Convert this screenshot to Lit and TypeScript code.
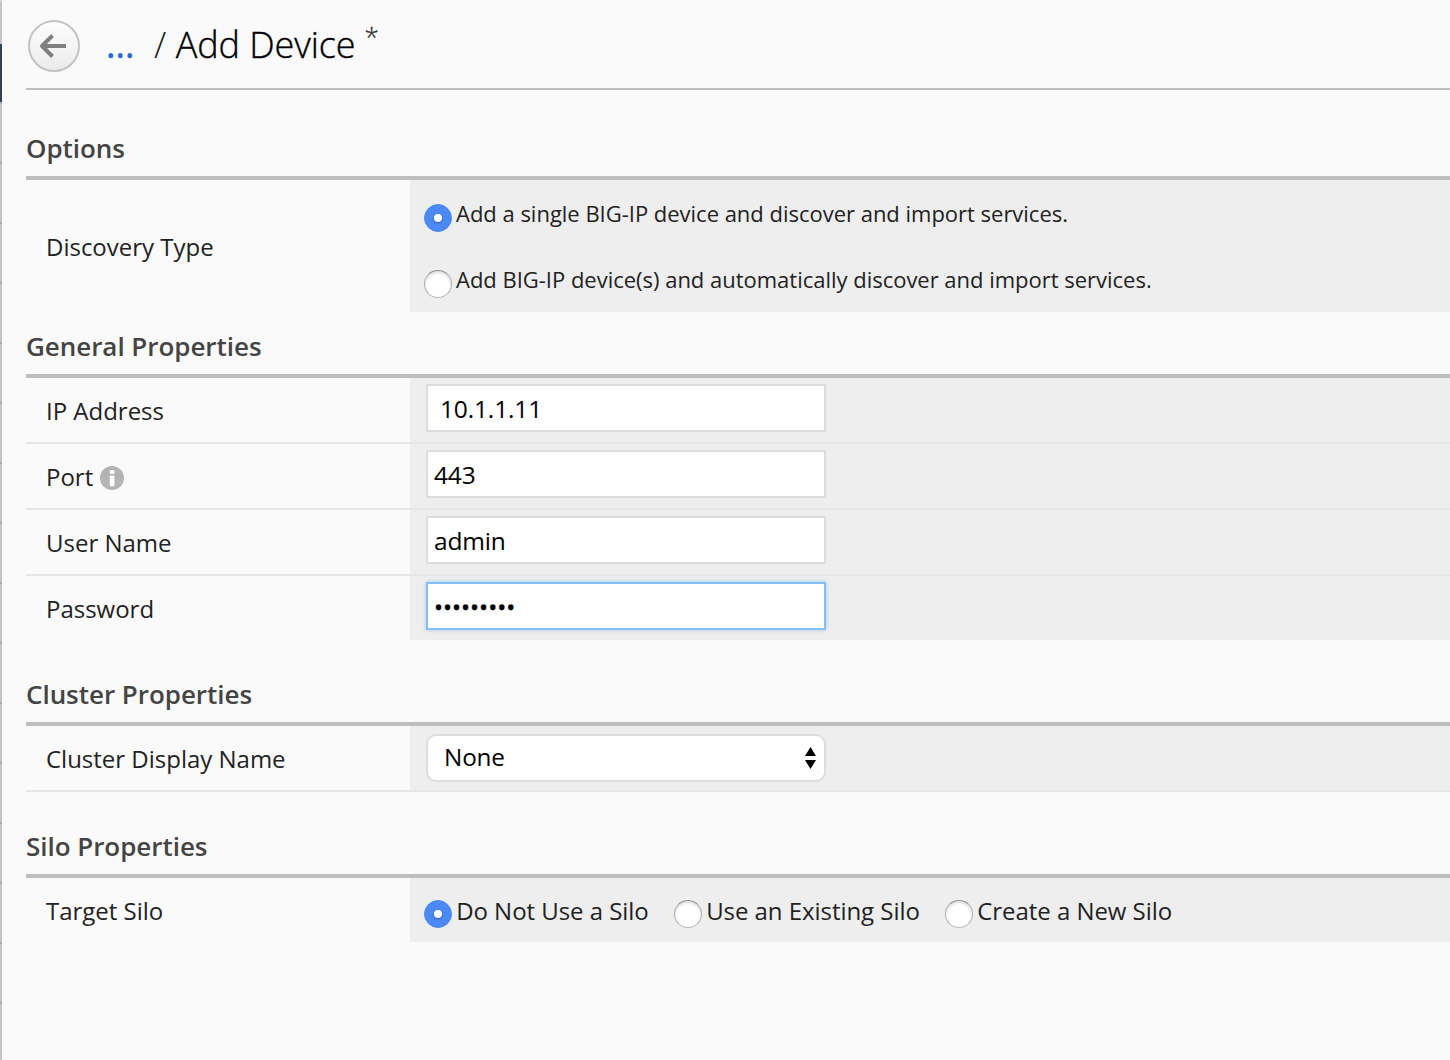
import { LitElement, html, css, svg } from "lit";
import { customElement, property } from "lit/decorators.js";
import { classMap } from "lit/directives/class-map.js";

@customElement("radio-option")
class RadioOption extends LitElement {
  @property() label = "";
  @property({ type: Boolean }) checked = false;

  static styles = css`
    :host { display: flex; align-items: flex-start; gap: var(--radio-gap, 4px); }
    .mark { box-sizing: border-box; flex: none; width: 28px; height: 28px; margin-top: var(--radio-drop, 6px);
      border-radius: 50%; display: grid; place-items: center; background: #fff;
      border: 1px solid #b0b0b0; border-top-color: #929292; border-bottom-color: #bcbcbc;
      box-shadow: inset 0 2px 3px rgba(0, 0, 0, 0.14); }
    .mark.on { background: #4b8af5; border-color: #4b8af5; box-shadow: none; }
    .mark.on::after { content: ""; width: 8px; height: 8px; border-radius: 50%; background: #fff;
      box-shadow: 0 1px 2px rgba(0, 0, 0, 0.35); }
    .label { white-space: nowrap; }
  `;

  render() {
    return html`<span class=${classMap({ mark: true, on: this.checked })}></span><span class="label">${this.label}</span>`;
  }
}

@customElement("form-section")
class FormSection extends LitElement {
  @property() heading = "";

  static styles = css`
    :host { display: block; }
    .heading { box-sizing: border-box; height: 62px; margin: 0; padding-top: 12px; border-bottom: 4px solid #bebebe;
      font-size: 26px; line-height: 36px; font-weight: 600; letter-spacing: -0.04px; color: #444; }
  `;

  render() {
    return html`<h2 class="heading">${this.heading}</h2><slot></slot>`;
  }
}

@customElement("form-row")
class FormRow extends LitElement {
  @property() label = "";
  @property({ type: Boolean }) info = false;
  @property({ type: Boolean, reflect: true }) divided = false;

  static styles = css`
    :host { display: grid; grid-template-columns: 384px 1fr; min-height: 64px; }
    :host([divided]) { border-bottom: 2px solid #e6e6e6; }
    .name { display: flex; align-items: center; gap: 7px; padding: 2px 0 0 20px; letter-spacing: -0.01px; }
    .info { width: 24px; height: 24px; display: block; margin-top: 2px; }
    .value { background: #eee; }
  `;

  render() {
    return html`
      <div class="name"><span>${this.label}</span>${this.info
        ? html`<svg class="info" viewBox="0 0 24 24">${svg`
            <circle cx="12" cy="12" r="12" fill="#b4b4b4"></circle>
            <rect x="9.8" y="4" width="4.6" height="4" rx="1" fill="#fff"></rect>
            <rect x="9.8" y="9.4" width="4.6" height="10.8" rx="1" fill="#fff"></rect>`}</svg>`
        : ""}</div>
      <div class="value"><slot></slot></div>`;
  }
}

@customElement("app-root")
class AppRoot extends LitElement {
  static styles = css`
    :host { display: flex; width: 100%; height: 1060px; overflow: hidden; background: #fafafa;
      font-family: "Open Sans", "Noto Sans", sans-serif; font-size: 24px; line-height: 34px; color: #222; }
    .rail { flex: none; width: 2px; display: flex; flex-direction: column; background: #c4c4c4; }
    .rail-top { height: 42px; border-top: 2px solid #d8d8d8; }
    .rail-active { height: 58px; background: #35435a; border-bottom: 2px solid #a9b2bc; }
    .rail-rest { flex: 1; background: repeating-linear-gradient(#c4c4c4 0 58px, #a4abb2 58px 60px); }
    .page { flex: 1; min-width: 0; padding-left: 24px; }
    .top { box-sizing: border-box; height: 90px; display: flex; align-items: flex-start; border-bottom: 2px solid #bebebe; }
    .back { flex: none; width: 56px; height: 56px; margin-top: 18px; }
    .crumbs { margin: 0; display: flex; align-items: flex-start; padding-top: 20px; font-size: 36px; line-height: 50px;
      font-weight: 300; color: #000; white-space: pre; }
    .more { width: 48px; margin-left: 24px; font-weight: 400; color: #2a6bcb; text-decoration: none;
      -webkit-text-stroke: 0.5px #2a6bcb; }
    .slash { width: 21.7px; color: #222; }
    .title { letter-spacing: -0.08px; -webkit-text-stroke: 0.35px #000; }
    .dirty { margin: -2px 0 0 9px; font-size: 26px; line-height: 36px; color: #333; -webkit-text-stroke: 0.3px #333; }
    .first { margin-top: 28px; }
    .second { margin-top: 4px; }
    .third, .fourth { margin-top: 24px; }
    .stack { display: grid; gap: 32px; height: 116px; padding: 16px 0 0 14px; grid-auto-rows: 34px;
      font-size: 22px; letter-spacing: -0.015px; --radio-drop: 8px; }
    .inline { display: flex; gap: 25.3px; height: 48px; padding: 16px 0 0 14px; letter-spacing: -0.05px; --radio-gap: 4.2px; }
    .field { box-sizing: border-box; width: 400px; height: 48px; margin: 6px 0 0 16px; padding: 6px 6px 0;
      border: 2px solid #ddd; background: #fff; color: #000; font-size: 24.5px; letter-spacing: -0.15px; white-space: pre; }
    .indent { padding-left: 12px; }
    .focused { border-color: #86bff5; box-shadow: 0 0 4px rgba(110, 175, 240, 0.6); }
    .masked { padding-top: 6px; font-size: 24px; letter-spacing: 0; -webkit-text-stroke: 0.4px #000; }
    .select { display: flex; justify-content: space-between; margin-top: 8px; padding: 4px 8px 0 16px;
      border-radius: 10px; font-size: 24.3px; }
    .arrows { width: 11px; height: 22px; margin-top: 7px; }
  `;

  render() {
    return html`
      <div class="rail"><div class="rail-top"></div><div class="rail-active"></div><div class="rail-rest"></div></div>
      <main class="page">
        <header class="top">
          <svg class="back" viewBox="0 0 56 56">
            <defs><linearGradient id="g" x1="0" y1="0" x2="0" y2="1"><stop offset="0" stop-color="#fdfdfd"></stop><stop offset="1" stop-color="#ebebeb"></stop></linearGradient></defs>
            <circle cx="28" cy="28" r="25" fill="url(#g)" stroke="#c4c4c4" stroke-width="2"></circle>
            <path d="M40 28H16.5M26.5 17.5L16 28L26.5 38.5" fill="none" stroke="#808080" stroke-width="4" stroke-linejoin="round"></path>
          </svg>
          <h1 class="crumbs"><a class="more">...</a><span class="slash">/</span><span class="title">Add Device</span><span class="dirty">*</span></h1>
        </header>
        <form-section class="first" heading="Options">
          <form-row label="Discovery Type">
            <div class="stack">
              <radio-option checked label="Add a single BIG-IP device and discover and import services."></radio-option>
              <radio-option label="Add BIG-IP device(s) and automatically discover and import services."></radio-option>
            </div>
          </form-row>
        </form-section>
        <form-section class="second" heading="General Properties">
          <form-row divided label="IP Address"><div class="field indent">10.1.1.11</div></form-row>
          <form-row divided info label="Port"><div class="field">443</div></form-row>
          <form-row divided label="User Name"><div class="field">admin</div></form-row>
          <form-row label="Password"><div class="field focused masked">•••••••••</div></form-row>
        </form-section>
        <form-section class="third" heading="Cluster Properties">
          <form-row divided label="Cluster Display Name">
            <div class="field select"><span>None</span>
              <svg class="arrows" viewBox="0 0 11 22"><path d="M5.5 0L11 9H0zM5.5 22L11 13H0z"></path></svg>
            </div>
          </form-row>
        </form-section>
        <form-section class="fourth" heading="Silo Properties">
          <form-row label="Target Silo">
            <div class="inline">
              <radio-option checked label="Do Not Use a Silo"></radio-option>
              <radio-option label="Use an Existing Silo"></radio-option>
              <radio-option label="Create a New Silo"></radio-option>
            </div>
          </form-row>
        </form-section>
      </main>`;
  }
}
